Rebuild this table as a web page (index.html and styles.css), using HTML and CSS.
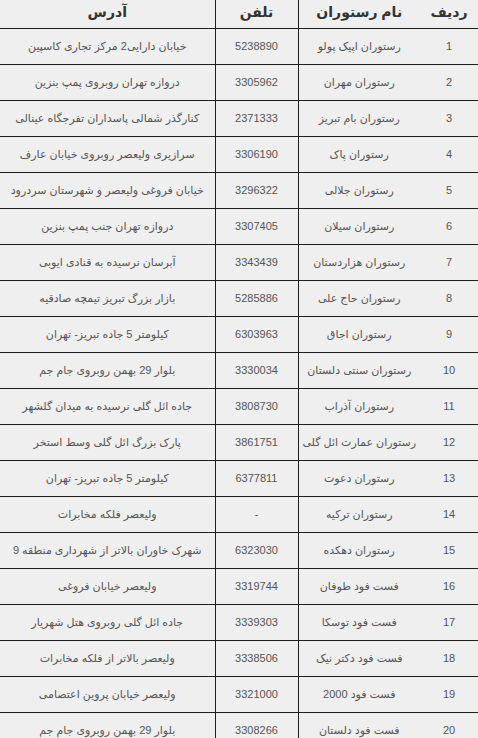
FILE: index.html
```html
<!DOCTYPE html>
<html lang="fa" dir="rtl">
<head>
<meta charset="utf-8">
<title>رستوران‌ها</title>
<link rel="stylesheet" href="styles.css">
</head>
<body>
<table class="list">
  <colgroup>
    <col class="c-num">
    <col class="c-name">
    <col class="c-tel">
    <col class="c-addr">
  </colgroup>
  <thead>
    <tr class="head"><th>ردیف</th><th>نام رستوران</th><th class="tel">تلفن</th><th>آدرس</th></tr>
  </thead>
  <tbody>
    <tr><td>1</td><td>رستوران اپیک پولو</td><td class="tel">5238890</td><td>خیابان دارایی2 مرکز تجاری کاسپین</td></tr>
    <tr><td>2</td><td>رستوران مهران</td><td class="tel">3305962</td><td>دروازه تهران روبروی پمپ بنزین</td></tr>
    <tr><td>3</td><td>رستوران بام تبریز</td><td class="tel">2371333</td><td>کنارگذر شمالی پاسداران تفرجگاه عینالی</td></tr>
    <tr><td>4</td><td>رستوران پاک</td><td class="tel">3306190</td><td>سرازیری ولیعصر روبروی خیابان عارف</td></tr>
    <tr><td>5</td><td>رستوران جلالی</td><td class="tel">3296322</td><td>خیابان فروغی ولیعصر و شهرستان سردرود</td></tr>
    <tr><td>6</td><td>رستوران سیلان</td><td class="tel">3307405</td><td>دروازه تهران جنب پمپ بنزین</td></tr>
    <tr><td>7</td><td>رستوران هزاردستان</td><td class="tel">3343439</td><td>آبرسان نرسیده به قنادی ایوبی</td></tr>
    <tr><td>8</td><td>رستوران حاج علی</td><td class="tel">5285886</td><td>بازار بزرگ تبریز تیمچه صادقیه</td></tr>
    <tr><td>9</td><td>رستوران اجاق</td><td class="tel">6303963</td><td>کیلومتر 5 جاده تبریز- تهران</td></tr>
    <tr><td>10</td><td>رستوران سنتی دلستان</td><td class="tel">3330034</td><td>بلوار 29 بهمن روبروی جام جم</td></tr>
    <tr><td>11</td><td>رستوران آذراب</td><td class="tel">3808730</td><td>جاده ائل گلی نرسیده به میدان گلشهر</td></tr>
    <tr><td>12</td><td>رستوران عمارت ائل گلی</td><td class="tel">3861751</td><td>پارک بزرگ ائل گلی وسط استخر</td></tr>
    <tr><td>13</td><td>رستوران دعوت</td><td class="tel">6377811</td><td>کیلومتر 5 جاده تبریز- تهران</td></tr>
    <tr><td>14</td><td>رستوران ترکیه</td><td class="tel">-</td><td>ولیعصر فلکه مخابرات</td></tr>
    <tr><td>15</td><td>رستوران دهکده</td><td class="tel">6323030</td><td>شهرک خاوران بالاتر از شهرداری منطقه 9</td></tr>
    <tr><td>16</td><td>فست فود طوفان</td><td class="tel">3319744</td><td>ولیعصر خیابان فروغی</td></tr>
    <tr><td>17</td><td>فست فود توسکا</td><td class="tel">3339303</td><td>جاده ائل گلی روبروی هتل شهریار</td></tr>
    <tr><td>18</td><td>فست فود دکتر نیک</td><td class="tel">3338506</td><td>ولیعصر بالاتر از فلکه مخابرات</td></tr>
    <tr><td>19</td><td>فست فود 2000</td><td class="tel">3321000</td><td>ولیعصر خیابان پروین اعتصامی</td></tr>
    <tr><td>20</td><td>فست فود دلستان</td><td class="tel">3308266</td><td>بلوار 29 بهمن روبروی جام جم</td></tr>
  </tbody>
</table>
</body>
</html>
```
FILE: styles.css
```css
html, body {
  margin: 0;
  padding: 0;
  background: #efefef;
}
body {
  font-family: "Liberation Sans", "DejaVu Sans", sans-serif;
  color: #555;
  overflow: hidden;
}
.list {
  width: 478px;
  border-collapse: collapse;
  table-layout: fixed;
}
.c-num { width: 58px; }
.c-name { width: 122px; }
.c-tel { width: 83px; }
.c-addr { width: 215px; }
.list th,
.list td {
  padding: 0;
  text-align: center;
  vertical-align: middle;
  border-bottom: 1px solid #1e1e1e;
  white-space: nowrap;
}
.list th {
  height: 28px;
  font-size: 14px;
  font-weight: bold;
  color: #333;
  padding-bottom: 3px;
  box-sizing: border-box;
}
.list td {
  height: 35px;
  font-size: 11px;
}
.list .tel {
  border-left: 1px solid #1e1e1e;
  border-right: 1px solid #1e1e1e;
}
```
